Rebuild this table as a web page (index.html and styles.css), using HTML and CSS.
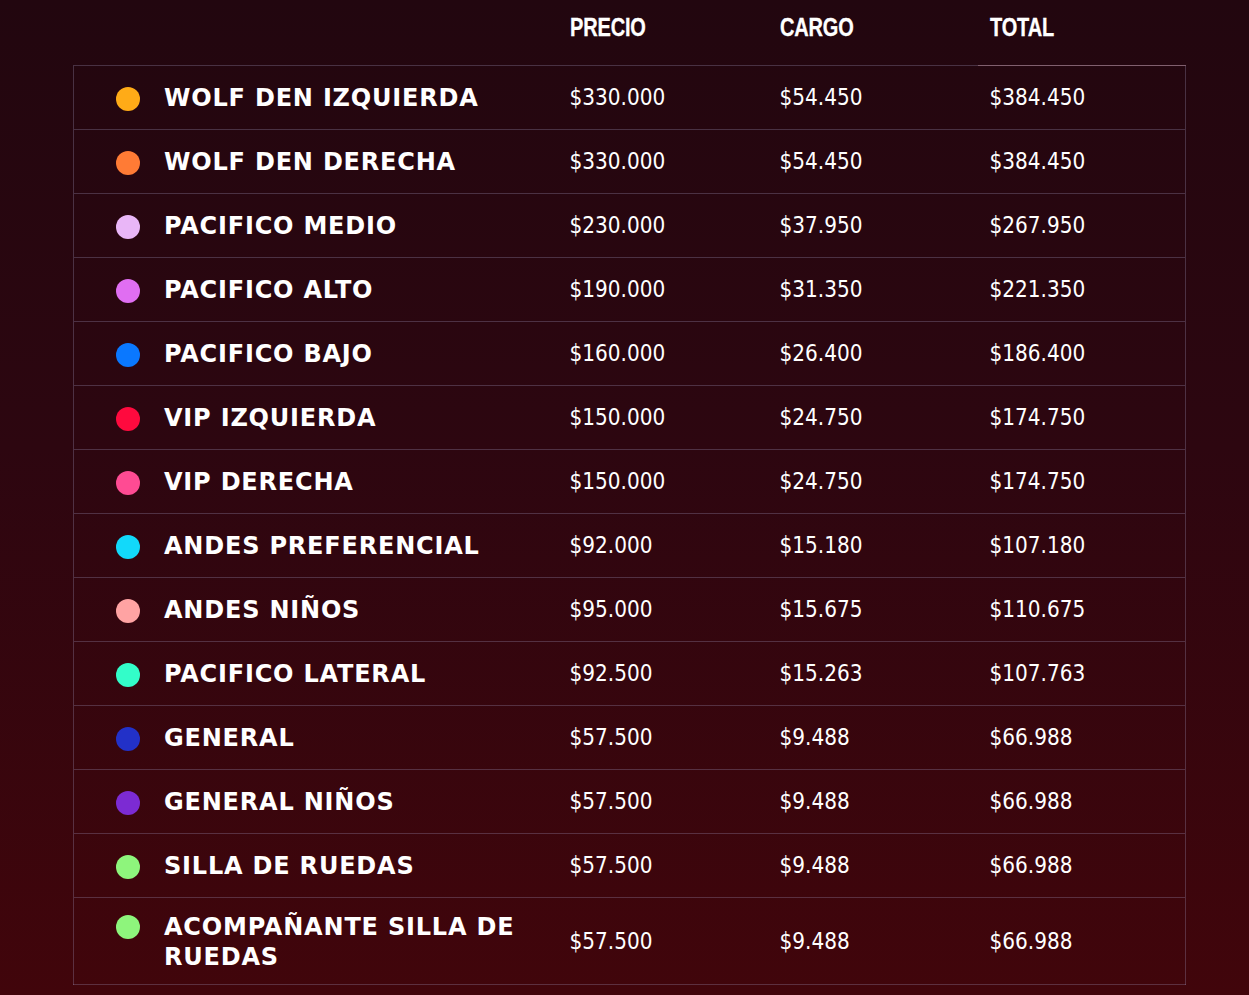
FILE: index.html
```html
<!DOCTYPE html>
<html lang="es">
<head>
<meta charset="utf-8">
<title>Precios</title>
<link rel="stylesheet" href="styles.css">
</head>
<body>
<div class="wrap">
<table class="prices">
<thead>
<tr><th class="c-name"></th><th><span class="hd">PRECIO</span></th><th><span class="hd">CARGO</span></th><th class="c-total"><span class="hd">TOTAL</span></th></tr>
</thead>
<tbody>
<tr><td class="c-name"><span class="dot d1"></span><span class="nm">WOLF DEN IZQUIERDA</span></td><td>$330.000</td><td>$54.450</td><td>$384.450</td></tr>
<tr><td class="c-name"><span class="dot d2"></span><span class="nm">WOLF DEN DERECHA</span></td><td>$330.000</td><td>$54.450</td><td>$384.450</td></tr>
<tr><td class="c-name"><span class="dot d3"></span><span class="nm">PACIFICO MEDIO</span></td><td>$230.000</td><td>$37.950</td><td>$267.950</td></tr>
<tr><td class="c-name"><span class="dot d4"></span><span class="nm">PACIFICO ALTO</span></td><td>$190.000</td><td>$31.350</td><td>$221.350</td></tr>
<tr><td class="c-name"><span class="dot d5"></span><span class="nm">PACIFICO BAJO</span></td><td>$160.000</td><td>$26.400</td><td>$186.400</td></tr>
<tr><td class="c-name"><span class="dot d6"></span><span class="nm">VIP IZQUIERDA</span></td><td>$150.000</td><td>$24.750</td><td>$174.750</td></tr>
<tr><td class="c-name"><span class="dot d7"></span><span class="nm">VIP DERECHA</span></td><td>$150.000</td><td>$24.750</td><td>$174.750</td></tr>
<tr><td class="c-name"><span class="dot d8"></span><span class="nm">ANDES PREFERENCIAL</span></td><td>$92.000</td><td>$15.180</td><td>$107.180</td></tr>
<tr><td class="c-name"><span class="dot d9"></span><span class="nm">ANDES NIÑOS</span></td><td>$95.000</td><td>$15.675</td><td>$110.675</td></tr>
<tr><td class="c-name"><span class="dot d10"></span><span class="nm">PACIFICO LATERAL</span></td><td>$92.500</td><td>$15.263</td><td>$107.763</td></tr>
<tr><td class="c-name"><span class="dot d11"></span><span class="nm">GENERAL</span></td><td>$57.500</td><td>$9.488</td><td>$66.988</td></tr>
<tr><td class="c-name"><span class="dot d12"></span><span class="nm">GENERAL NIÑOS</span></td><td>$57.500</td><td>$9.488</td><td>$66.988</td></tr>
<tr><td class="c-name"><span class="dot d13"></span><span class="nm">SILLA DE RUEDAS</span></td><td>$57.500</td><td>$9.488</td><td>$66.988</td></tr>
<tr class="tall"><td class="c-name"><span class="dot d13"></span><span class="nm">ACOMPAÑANTE SILLA DE RUEDAS</span></td><td>$57.500</td><td>$9.488</td><td>$66.988</td></tr>
</tbody>
</table>
</div>
</body>
</html>
```

FILE: styles.css
```css
html, body {
  margin: 0;
  padding: 0;
}
body {
  min-height: 995px;
  background: linear-gradient(180deg, #22060f 0%, #2d0610 45%, #41050b 100%);
  color: #ffffff;
  font-family: "DejaVu Sans", sans-serif;
}
.wrap {
  padding: 0 63px 0 73px;
}
.prices {
  width: 1113px;
  border-collapse: collapse;
  table-layout: fixed;
}
.prices th, .prices td {
  text-align: left;
  padding: 0 0 0 12px;
}
.prices th {
  height: 65px;
  vertical-align: middle;
  padding-bottom: 10px;
  box-sizing: border-box;
}
.hd {
  display: inline-block;
  font-family: "Liberation Sans", sans-serif;
  font-weight: 700;
  font-size: 25px;
  transform: scaleX(0.8);
  transform-origin: left center;
  letter-spacing: -0.2px;
  -webkit-text-stroke: 0.3px #ffffff;
}
.prices th.c-name {
  width: 484px;
}
.prices th:nth-child(2), .prices th:nth-child(3) {
  width: 210px;
}
.prices th.c-total {
  border-bottom: 1px solid rgba(205, 170, 190, 0.55);
}
.prices tbody tr {
  height: 64px;
  border-top: 1px solid rgba(160, 150, 190, 0.3);
}
.prices tbody {
  border: 1px solid rgba(160, 150, 190, 0.3);
}
.prices td {
  font-size: 22.3px;
  font-stretch: condensed;
  vertical-align: middle;
}
.prices td.c-name {
  padding-left: 42px;
  font-stretch: normal;
}
td.c-name {
  display: flex;
  align-items: center;
  gap: 24px;
  height: 63px;
}
.nm {
  font-weight: 700;
  font-size: 24px;
  letter-spacing: 0.8px;
  line-height: 30px;
  padding-top: 1px;
}
.dot {
  flex: none;
  width: 24px;
  height: 24px;
  border-radius: 50%;
  margin-top: 3px;
}
.tall td.c-name {
  height: 86px;
  align-items: flex-start;
  padding-top: 13px;
  box-sizing: border-box;
}
.tall .dot { margin-top: 4px; }
.d1 { background: #ffab17; }
.d2 { background: #ff7b35; }
.d3 { background: #e9b6f7; }
.d4 { background: #e06ef2; }
.d5 { background: #0a78ff; }
.d6 { background: #ff0a3e; }
.d7 { background: #ff4b93; }
.d8 { background: #12d9fa; }
.d9 { background: #ffa3a3; }
.d10 { background: #33fdc9; }
.d11 { background: #2231c8; }
.d12 { background: #7c2bd3; }
.d13 { background: #8ef57c; }
```
